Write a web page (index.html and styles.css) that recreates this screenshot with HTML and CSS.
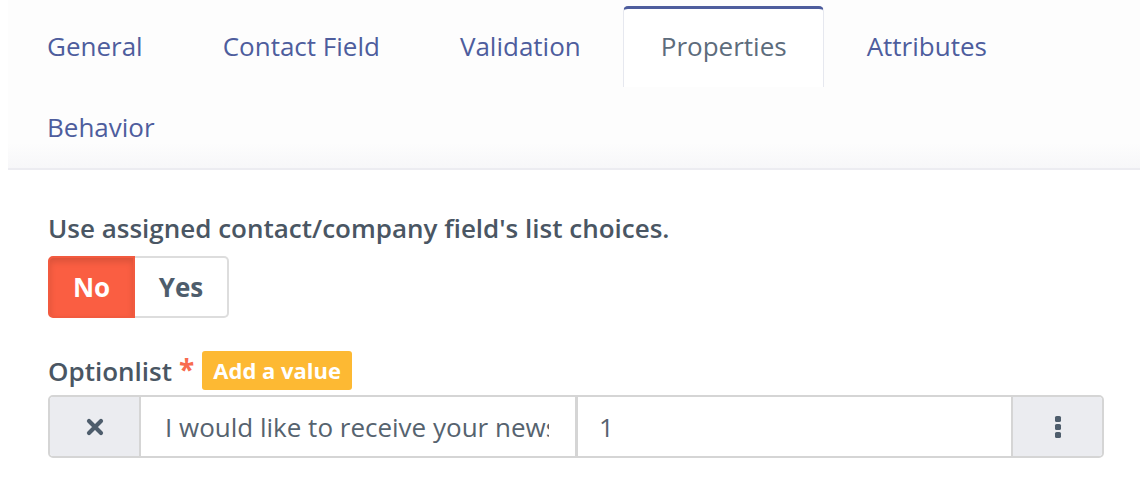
FILE: index.html
```html
<!DOCTYPE html>
<html>
<head>
<meta charset="utf-8">
<link rel="stylesheet" href="styles.css">
</head>
<body>
<div class="page">
  <div class="tabbar">
    <ul class="tabs">
      <li class="tab"><a>General</a></li>
      <li class="tab"><a>Contact Field</a></li>
      <li class="tab"><a>Validation</a></li>
      <li class="tab active"><a>Properties</a></li>
      <li class="tab"><a>Attributes</a></li>
      <li class="tab"><a>Behavior</a></li>
    </ul>
  </div>
  <div class="content">
    <div class="label">Use assigned contact/company field's list choices.</div>
    <div class="btn-group">
      <span class="btn btn-no">No</span>
      <span class="btn btn-yes">Yes</span>
    </div>
    <div class="label-row">
      <span class="label">Optionlist</span>
      <span class="req">*</span>
      <span class="badge">Add a value</span>
    </div>
    <div class="input-group">
      <span class="addon addon-left">
        <svg width="18" height="18" viewBox="0 0 18 18"><path d="M3 3 L15 15 M15 3 L3 15" stroke="#4e5d6c" stroke-width="4.2" stroke-linecap="round"/></svg>
      </span>
      <span class="field field-label"><span class="clip">I would like to receive your newsletter</span></span>
      <span class="field field-value"><span class="clip">1</span></span>
      <span class="addon addon-right">
        <svg width="8" height="24" viewBox="0 0 8 24"><rect x="1" y="1" width="6" height="6" rx="1.6" fill="#4e5d6c"/><rect x="1" y="9" width="6" height="6" rx="1.6" fill="#4e5d6c"/><rect x="1" y="17" width="6" height="6" rx="1.6" fill="#4e5d6c"/></svg>
      </span>
    </div>
  </div>
</div>
</body>
</html>
```

FILE: styles.css
```css
html, body {
  margin: 0;
  padding: 0;
  background: #ffffff;
}
body {
  font-family: "Open Sans", "Liberation Sans", sans-serif;
  color: #4e5d6c;
  width: 1140px;
  height: 488px;
  overflow: hidden;
}
.page {
  padding-left: 8px;
}
.tabbar {
  background: linear-gradient(to bottom, #fdfdfd 0%, #fdfdfd 85%, #f7f7f9 100%);
  border-bottom: 2px solid #ececf1;
  padding-top: 6px;
}
.tabs {
  list-style: none;
  margin: 0;
  padding: 0 0 0 1px;
  display: flex;
  flex-wrap: wrap;
  column-gap: 5px;
}
.tab {
  height: 81px;
  display: flex;
  align-items: center;
  padding: 0 36px 0 37px;
  box-sizing: border-box;
  border: 1px solid transparent;
  border-top: 3px solid transparent;
  border-bottom: none;
}
.tab a {
  font-size: 26px;
  color: #4e5d9d;
  line-height: 32px;
  white-space: nowrap;
  margin-top: -4px;
}
.tab.active {
  background: #ffffff;
  border-color: #e6e8ef;
  border-top-color: #4e5d9d;
  border-radius: 5px 5px 0 0;
}
.tab.active a {
  color: #5d6c7c;
}
.content {
  padding: 42px 36px 0 40px;
}
.label {
  font-size: 26px;
  font-weight: 600;
  line-height: 32px;
  color: #4a5663;
}
.btn-group {
  display: inline-flex;
  margin-top: 12px;
  height: 62px;
}
.btn {
  display: flex;
  align-items: center;
  font-size: 26px;
  font-weight: 700;
  box-sizing: border-box;
}
.btn-no {
  background: #fa5e42;
  color: #ffffff;
  width: 87px;
  justify-content: center;
  border-radius: 5px 0 0 5px;
  box-shadow: inset 0 4px 6px rgba(0, 0, 0, 0.12);
  border: 2px solid #f25a3f;
}
.btn-yes {
  background: #ffffff;
  color: #4e5d6c;
  width: 94px;
  justify-content: center;
  border: 2px solid #dddddd;
  border-left: none;
  border-radius: 0 5px 5px 0;
}
.label-row {
  display: flex;
  align-items: center;
  margin-top: 33px;
  height: 39px;
}
.req {
  color: #f86b4f;
  font-size: 28px;
  font-weight: 700;
  margin-left: 7px;
  line-height: 32px;
  margin-top: -4px;
}
.badge {
  margin-left: 8px;
  background: #fdb933;
  color: #ffffff;
  font-size: 22px;
  font-weight: 700;
  height: 39px;
  line-height: 39px;
  padding: 0 11px;
  border-radius: 3px;
}
.input-group {
  display: flex;
  margin-top: 5px;
  height: 63px;
  box-sizing: border-box;
  border: 2px solid #d5d5d5;
  border-radius: 5px;
  overflow: hidden;
  width: 1056px;
}
.addon {
  background: #ebecf0;
  display: flex;
  align-items: center;
  justify-content: center;
  width: 89px;
  flex: none;
}
.addon-left {
  border-right: 2px solid #d5d5d5;
}
.addon-right {
  border-left: 2px solid #d5d5d5;
}
.field {
  display: flex;
  align-items: center;
  font-size: 26px;
  color: #56636f;
  box-sizing: border-box;
  background: #ffffff;
  min-width: 0;
}
.clip {
  display: block;
  white-space: nowrap;
  overflow: hidden;
  width: 100%;
}
.field-label {
  width: 437px;
  padding: 0 26px 0 24px;
  border-right: 3px solid #d5d5d5;
  flex: none;
}
.field-value {
  flex: 1;
  padding: 0 20px 0 21px;
}
```
